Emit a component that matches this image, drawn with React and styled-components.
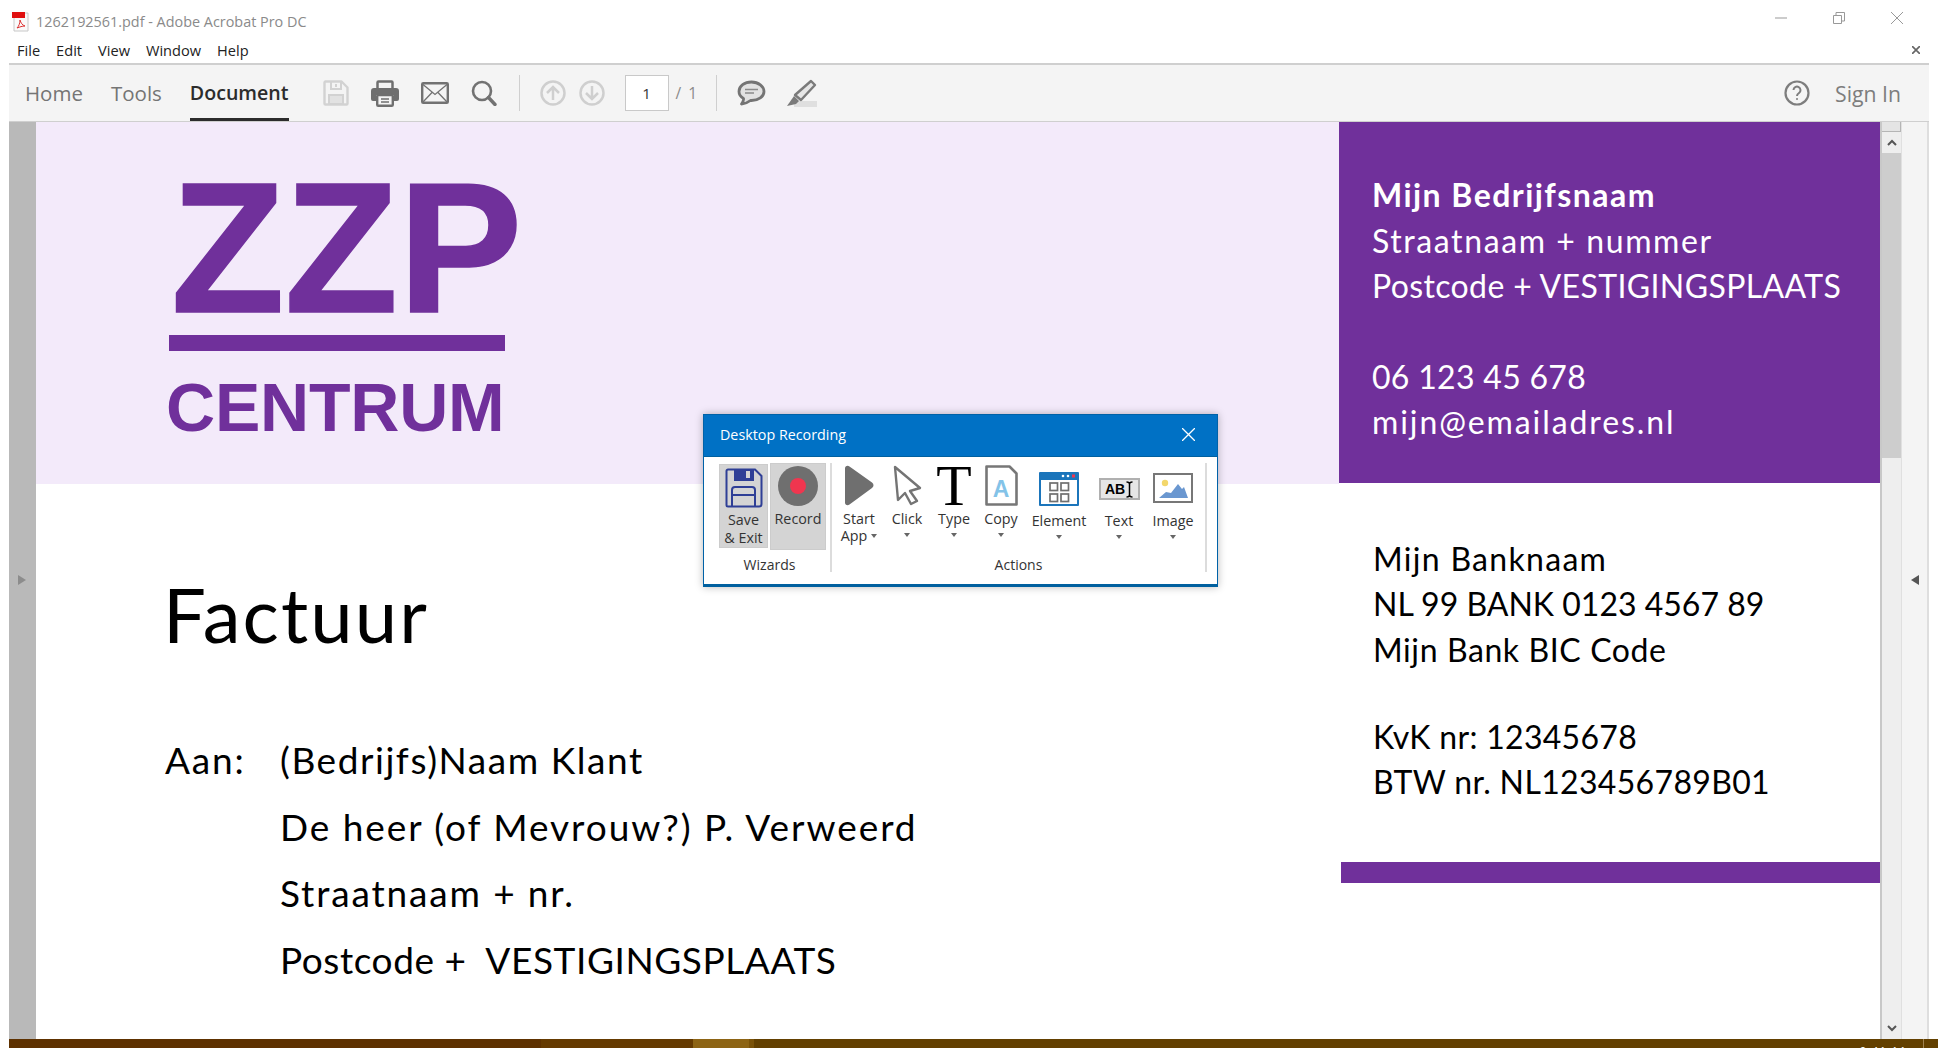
import styled, { createGlobalStyle } from "styled-components";

const GlobalStyle = createGlobalStyle`
    html, body {
        margin: 0;
        padding: 0;
        background: #fff;
        overflow: hidden;
    }
    * {
        box-sizing: border-box;
    }
`;

const UI_FONT = `"Open Sans", "Noto Sans", sans-serif`;
const DOC_FONT = `Lato, "Noto Sans", sans-serif`;
const LOGO_FONT = `"Liberation Sans", Arial, sans-serif`;
const PURPLE = "#70309b";

const Window = styled.div`
    width: 1938px;
    height: 1048px;
    display: flex;
    flex-direction: column;
    background: #fff;
    overflow: hidden;
    font-family: ${UI_FONT};
`;

const TitleBar = styled.div`
    height: 35px;
    display: flex;
    align-items: center;
    justify-content: space-between;
    padding: 8px 0 0 12px;
`;

const TitleLeft = styled.div`
    display: flex;
    align-items: center;
    gap: 6px;
    font-size: 14.4px;
    color: #8a8a8a;
`;

const WindowButtons = styled.div`
    display: flex;
    align-items: center;
    gap: 46px;
    padding: 0 35px 8px 0;
`;

const MenuBar = styled.div`
    height: 28px;
    display: flex;
    align-items: center;
    justify-content: space-between;
    padding: 1px 18px 0 17px;
`;

const MenuList = styled.div`
    display: flex;
    gap: 16px;
    font-size: 14.6px;
    color: #222;
`;

const Toolbar = styled.div`
    height: 59px;
    margin: 0 9px;
    display: flex;
    align-items: center;
    background: #f4f4f4;
    border-top: 2px solid #cfcfcf;
    border-bottom: 1px solid #cfcfcf;
    padding-left: 16px;
`;

const Tab = styled.div`
    height: 100%;
    display: flex;
    align-items: center;
    padding-top: 2px;
    margin-right: 28px;
    font-size: ${(p) => (p.$active ? 19.6 : 20.5)}px;
    font-weight: ${(p) => (p.$active ? 600 : 500)};
    color: ${(p) => (p.$active ? "#2c2c2c" : "#757575")};
    border-bottom: 3px solid ${(p) => (p.$active ? "#2c2c2c" : "transparent")};
`;

const ToolIcons = styled.div`
    display: flex;
    align-items: center;
    gap: ${(p) => p.$gap || 22}px;
    margin-left: ${(p) => p.$left || 0}px;
`;

const Divider = styled.div`
    width: 1px;
    height: 36px;
    background: #cfcfcf;
    margin: 0 ${(p) => p.$right || 20}px 0 ${(p) => p.$left || 22}px;
`;

const PageBox = styled.div`
    width: 44px;
    height: 36px;
    margin-left: 20px;
    display: flex;
    align-items: center;
    justify-content: center;
    background: #fff;
    border: 1px solid #c9c9c9;
    font-size: 15px;
    color: #333;
`;

const PageTotal = styled.div`
    margin-left: 7px;
    font-size: 15.5px;
    color: #8a8a8a;
    word-spacing: 3px;
`;

const ToolbarRight = styled.div`
    margin-left: auto;
    display: flex;
    align-items: center;
    gap: 25px;
    padding-right: 28px;
    font-size: 21.2px;
    font-weight: 500;
    color: #7d7d7d;
`;

const Content = styled.div`
    flex: 1;
    min-height: 0;
    margin-left: 9px;
    display: flex;
`;

const LeftGutter = styled.div`
    width: 27px;
    background: #b9b9b9;
    display: flex;
    align-items: center;
    justify-content: center;
    padding: 0 2px 2px 0;
`;

const Page = styled.div`
    position: relative;
    width: 1844px;
    display: grid;
    grid-template-columns: 1303px 541px;
    background: #fff;
    overflow: hidden;
`;

const MainColumn = styled.div`
    display: flex;
    flex-direction: column;
`;

const Banner = styled.div`
    height: 362px;
    background: #f3eafa;
    padding: 51px 0 0 133px;
    color: ${PURPLE};
    font-family: ${LOGO_FONT};
    font-weight: 700;
`;

const LogoMain = styled.div`
    width: fit-content;
    font-size: 186px;
    line-height: 150px;
    margin-left: 2px;
    -webkit-text-stroke: 1.5px ${PURPLE};
`;

const LogoRule = styled.div`
    width: 336px;
    height: 16px;
    margin-top: 12px;
    background: ${PURPLE};
`;

const LogoSub = styled.div`
    width: fit-content;
    font-size: 68px;
    line-height: 56px;
    margin-top: 28px;
    margin-left: -3px;
    letter-spacing: -0.2px;
`;

const Invoice = styled.div`
    padding: 84px 0 0 129px;
    font-family: ${DOC_FONT};
    color: #000;
`;

const InvoiceTitle = styled.div`
    width: fit-content;
    font-size: 76px;
    line-height: 92px;
    margin-left: -2px;
    letter-spacing: 2.1px;
`;

const Address = styled.div`
    margin-top: 67px;
    display: grid;
    grid-template-columns: 115px 1fr;
    font-size: 37px;
    line-height: 66.5px;
`;

const SideColumn = styled.div`
    display: flex;
    flex-direction: column;
    font-family: ${DOC_FONT};
`;

const ContactCard = styled.div`
    height: 361px;
    background: ${PURPLE};
    color: #fff;
    padding: 50px 0 0 33px;
    font-size: 32px;
    line-height: 45.5px;
`;

// Calibri is not installed: Lato stands in, with spacing set per line to get the widths
const Line = styled.div`
    font-weight: ${(p) => (p.$bold ? 700 : 400)};
    letter-spacing: ${(p) => p.$spacing || 0}px;
    white-space: nowrap;
`;

const Gap = styled.div`
    height: ${(p) => p.$size}px;
`;

const BankInfo = styled.div`
    padding: 53px 0 0 34px;
    font-size: 32px;
    line-height: 45.3px;
    color: #000;
`;

const SideRule = styled.div`
    height: 21px;
    margin-top: 58px;
    margin-left: 2px;
    background: ${PURPLE};
`;

const Scrollbar = styled.div`
    width: 22px;
    display: flex;
    flex-direction: column;
    align-items: center;
    background: #eeeeee;
    border-left: 2px solid #c8c8c8;
    border-right: 1px solid #e0e0e0;
`;

const ScrollCap = styled.div`
    width: 100%;
    height: 10px;
    background: #e4e4e4;
    border-right: 1px solid #b5b5b5;
    border-bottom: 1px solid #b5b5b5;
`;

const ScrollArrow = styled.div`
    height: 21px;
    display: flex;
    align-items: center;
    justify-content: center;
`;

const ScrollThumb = styled.div`
    width: 19px;
    height: 305px;
    background: #cdcdcd;
`;

const ScrollSpace = styled.div`
    flex: 1;
`;

const RightPanel = styled.div`
    width: 27px;
    background: #f4f4f4;
    border-right: 2px solid #dedede;
    display: flex;
    align-items: center;
    justify-content: center;
    padding-bottom: 2px;
`;

const TaskBar = styled.div`
    height: 9px;
    margin-left: 9px;
    display: flex;
    overflow: hidden;
`;

const TaskPart = styled.div`
    width: ${(p) => (p.$width ? `${p.$width}px` : "auto")};
    flex: ${(p) => (p.$width ? "none" : 1)};
    background: ${(p) => p.$color};
`;

const TaskTray = styled.div`
    flex: 1;
    display: flex;
    justify-content: flex-end;
    background: #634000;
    padding-right: 14px;
`;

const TrayClock = styled.div`
    padding: 5px 16px 0 0;
    border-right: 1px solid #a08250;
    color: #fff;
    font-size: 12px;
    line-height: 16px;
    letter-spacing: 1px;
`;

const Dialog = styled.div`
    position: absolute;
    left: 667px;
    top: 292px;
    width: 515px;
    height: 173px;
    display: flex;
    flex-direction: column;
    background: #fff;
    border: 1px solid #0062a8;
    border-bottom: 3px solid #00609f;
    box-shadow: 0 0 8px rgba(0, 0, 0, 0.28);
    font-family: ${UI_FONT};
`;

const DialogHeader = styled.div`
    height: 42px;
    flex: none;
    display: flex;
    align-items: center;
    justify-content: space-between;
    padding: 0 22px 3px 16px;
    background: #0071c5;
    border-bottom: 1px solid #00609f;
    color: #fff;
    font-size: 14.3px;
`;

const Ribbon = styled.div`
    flex: 1;
    display: flex;
    padding: 6px 0 0 15px;
`;

const RibbonGroup = styled.div`
    width: ${(p) => p.$width}px;
    display: flex;
    flex-direction: column;
    border-right: 2px solid #dcdcdc;
    height: 109px;
`;

const GroupItems = styled.div`
    height: 94px;
    display: flex;
    align-items: flex-start;
    padding-left: ${(p) => p.$pad || 0}px;
`;

const GroupLabel = styled.div`
    height: 15px;
    display: flex;
    align-items: center;
    justify-content: center;
    padding-right: ${(p) => p.$shift || 0}px;
    font-size: 14px;
    color: #333;
`;

const WizardButton = styled.div`
    width: ${(p) => p.$width}px;
    height: ${(p) => p.$height}px;
    margin-top: ${(p) => p.$top || 0}px;
    margin-right: 2px;
    padding-top: ${(p) => p.$pad}px;
    display: flex;
    flex-direction: column;
    align-items: center;
    background: #d4d4d4;
    border: 1px solid #cccccc;
    font-size: 14.3px;
    line-height: 18px;
    color: #333;
    text-align: center;
    white-space: nowrap;
`;

const WizardText = styled.span`
    margin-top: ${(p) => p.$top}px;
`;

const ActionItem = styled.div`
    width: ${(p) => p.$width}px;
    display: flex;
    flex-direction: column;
    align-items: center;
    font-size: 14.3px;
    line-height: 17px;
    color: #333;
    text-align: center;
    white-space: nowrap;
`;

const ActionIcon = styled.div`
    height: 43px;
    display: flex;
    align-items: flex-end;
    justify-content: center;
    padding-bottom: ${(p) => p.$bottom || 0}px;
`;

const ActionText = styled.div`
    margin-top: ${(p) => p.$top || 4}px;
`;

const Caret = styled.span`
    display: ${(p) => (p.$inline ? "inline-block" : "block")};
    width: 0;
    height: 0;
    margin: ${(p) => (p.$inline ? "0 0 3px 4px" : "6px auto 0")};
    border-left: 3.5px solid transparent;
    border-right: 3.5px solid transparent;
    border-top: 4px solid #666;
`;

const Triangle = styled.div`
    width: 0;
    height: 0;
    border-top: 5px solid transparent;
    border-bottom: 5px solid transparent;
    ${(p) =>
        p.$dir === "left"
            ? "border-right: 8px solid #555;"
            : "border-left: 8px solid #8c8c8c;"}
`;

const PdfIcon = () => (
    <svg width="18" height="20" viewBox="0 0 18 20">
        <path d="M2 1h14v18H2z" fill="#fafafa" stroke="#c8c8c8" />
        <rect x="0" y="0" width="13" height="6" fill="#e01010" />
        <path d="M5 16c2-2 3-5 3-8 1 3 2 5 5 6-3 0-5 1-8 2z" fill="none" stroke="#d33" strokeWidth="1" />
    </svg>
);

const MinimizeIcon = () => (
    <svg width="12" height="12" viewBox="0 0 12 12">
        <path d="M0 6h12" stroke="#999" strokeWidth="1" />
    </svg>
);

const RestoreIcon = () => (
    <svg width="12" height="12" viewBox="0 0 12 12">
        <path d="M.5 3.5h8v8h-8zM3 3V.5h8.500V9H9" fill="none" stroke="#999" />
    </svg>
);

const CloseIcon = ({ size = 12, color = "#999", width = 1 }) => (
    <svg width={size} height={size} viewBox="0 0 12 12">
        <path d="M0 0l12 12M12 0L0 12" stroke={color} strokeWidth={width} />
    </svg>
);

const SaveIcon = () => (
    <svg width="26" height="26" viewBox="0 0 26 26">
        <path d="M2.500 1.500h16l6 6v16a1 1 0 0 1-1 1h-21a1 1 0 0 1-1-1v-21a1 1 0 0 1 1-1z" fill="#f4f4f4" stroke="#d2d2d2" strokeWidth="2.400" strokeLinejoin="round" />
        <path d="M8 2v7h10V2" fill="none" stroke="#d2d2d2" strokeWidth="2" />
        <path d="M13 4v3" stroke="#d2d2d2" strokeWidth="2" />
        <rect x="6" y="15" width="14" height="9" fill="#e2e2e2" stroke="#d2d2d2" strokeWidth="2" />
    </svg>
);

const PrintIcon = () => (
    <svg width="28" height="27" viewBox="0 0 28 27">
        <rect x="6.500" y="1.500" width="15" height="9" rx="1" fill="#f4f4f4" stroke="#6f6f6f" strokeWidth="2.500" />
        <path d="M3 8h22a3 3 0 0 1 3 3v8a2 2 0 0 1-2 2h-3v-6H5v6H2a2 2 0 0 1-2-2v-8a3 3 0 0 1 3-3z" fill="#6f6f6f" />
        <rect x="6.200" y="15" width="15.600" height="10.800" rx="1" fill="#f4f4f4" stroke="#6f6f6f" strokeWidth="2.400" />
        <path d="M10 19h8M10 22h8" stroke="#6f6f6f" strokeWidth="1.500" />
    </svg>
);

const MailIcon = () => (
    <svg width="28" height="22" viewBox="0 0 28 22" fill="none" stroke="#727272">
        <rect x="1.200" y="1.200" width="25.600" height="19.600" rx="1" strokeWidth="2.400" />
        <path d="M2 2.500l12 10 12-10M2 20l9-9.500M26 20l-9-9.500" strokeWidth="1.300" />
    </svg>
);

const SearchIcon = () => (
    <svg width="26" height="26" viewBox="0 0 26 26" fill="none" stroke="#727272">
        <circle cx="11" cy="11" r="9" strokeWidth="2.600" />
        <path d="M17.500 17.500l6.500 7" strokeWidth="3.400" strokeLinecap="round" />
    </svg>
);

const RoundArrowIcon = ({ down }) => (
    <svg width="26" height="26" viewBox="0 0 26 26" fill="none" stroke="#cfcfcf" strokeWidth="2.500">
        <circle cx="13" cy="13" r="11.500" />
        <path d={down ? "M13 6v13M7 13l6 6 6-6" : "M13 20V7M7 13l6-6 6 6"} />
    </svg>
);

const CommentIcon = () => (
    <svg width="29" height="27" viewBox="0 0 29 27">
        <path d="M14.500 2C7.500 2 2 6 2 11.500c0 3 1.500 5.300 4.500 7 .3 1.800-.5 3.500-2 5.500 3.500-.2 6.500-1.600 9-3.500h1c7 0 12.500-4 12.500-9S21.500 2 14.500 2z" fill="#e2e2e2" stroke="#747474" strokeWidth="2.800" strokeLinejoin="round" />
        <path d="M8 9.500h13M8 13h9" stroke="#8a8a8a" strokeWidth="1.500" />
    </svg>
);

const PenIcon = () => (
    <svg width="31" height="29" viewBox="0 0 31 29">
        <rect x="8" y="22" width="23" height="6" fill="#dfdfdf" />
        <path d="M25 2l4 4-14 15-6-5z" fill="#e6e6e6" stroke="#7a7a7a" strokeWidth="2.400" strokeLinejoin="round" />
        <path d="M8 17l5 5-3 3-9 2z" fill="#7a7a7a" />
    </svg>
);

const HelpIcon = () => (
    <svg width="26" height="26" viewBox="0 0 26 26" fill="none" stroke="#7d7d7d">
        <circle cx="13" cy="13" r="11.500" strokeWidth="2.200" />
        <path d="M9.500 10a3.500 3.500 0 1 1 5.500 3c-1.300.9-2 1.500-2 3" strokeWidth="2" />
        <circle cx="13" cy="19" r="1" fill="#7d7d7d" stroke="none" />
    </svg>
);

const ChevronIcon = ({ down }) => (
    <svg width="10" height="7" viewBox="0 0 10 7" fill="none" stroke="#555" strokeWidth="2">
        <path d={down ? "M1 1l4 4 4-4" : "M1 6l4-4 4 4"} />
    </svg>
);

const FloppyIcon = () => (
    <svg width="38" height="40" viewBox="0 0 38 40">
        <path d="M3 1.500h27l6.500 6.500v28a2.500 2.500 0 0 1-2.500 2.500H3A1.500 1.500 0 0 1 1.500 37V3A1.500 1.500 0 0 1 3 1.500z" fill="#d4d4d4" stroke="#2f3f96" strokeWidth="2" />
        <rect x="9" y="1" width="20" height="12" fill="#2f3f96" />
        <rect x="21" y="3" width="4" height="7" fill="#d4d4d4" />
        <path d="M7 39V22a3 3 0 0 1 3-3h17a3 3 0 0 1 3 3v17M7 27h23" fill="none" stroke="#2f3f96" strokeWidth="2" />
    </svg>
);

const RecordIcon = () => (
    <svg width="40" height="40" viewBox="0 0 40 40">
        <circle cx="20" cy="20" r="20" fill="#6f6f6f" />
        <circle cx="20" cy="20" r="8" fill="#f0364f" />
    </svg>
);

const PlayIcon = () => (
    <svg width="30" height="41" viewBox="0 0 30 41">
        <path d="M1 3.500c0-2.500 2.500-3.500 4.500-2l22.500 16c2 1.500 2 4 0 5.500L5.500 39.500c-2 1.500-4.500.5-4.500-2z" fill="#6f6f6f" />
    </svg>
);

const CursorIcon = () => (
    <svg width="30" height="41" viewBox="0 0 30 41">
        <path d="M3 2l25 21-10 3 7 10-6 3-6-11-7 7z" fill="#fff" stroke="#747474" strokeWidth="2.400" strokeLinejoin="round" />
    </svg>
);

const CopyIcon = () => (
    <svg width="33" height="41" viewBox="0 0 33 41">
        <path d="M1.500 1.500h23l7 7v31h-30z" fill="#fff" stroke="#777" strokeWidth="2.600" strokeLinejoin="round" />
    </svg>
);

const ElementIcon = () => (
    <svg width="40" height="34" viewBox="0 0 40 34">
        <rect x="0" y="0" width="40" height="34" rx="1" fill="#1b75bb" />
        <rect x="2" y="8" width="36" height="24" fill="#fff" />
        <circle cx="24" cy="4" r="1.300" fill="#fff" />
        <circle cx="29" cy="4" r="1.300" fill="#fff" />
        <rect x="33" y="2.500" width="3" height="3" fill="#f0364f" />
        <g fill="none" stroke="#6f6f6f" strokeWidth="1.700">
            <rect x="11" y="11" width="7.500" height="7.500" />
            <rect x="22" y="11" width="7.500" height="7.500" />
            <rect x="11" y="22" width="7.500" height="7.500" />
            <rect x="22" y="22" width="7.500" height="7.500" />
        </g>
    </svg>
);

const ImageIcon = () => (
    <svg width="40" height="30" viewBox="0 0 40 30">
        <rect x="1" y="1" width="38" height="28" fill="#fff" stroke="#777" strokeWidth="2" />
        <circle cx="12" cy="10" r="3.200" fill="#f3d76b" />
        <path d="M6 25l7-6 5 1 7-9 4 5 2-2 4 11z" fill="#6a97d0" />
    </svg>
);

const IBeamIcon = () => (
    <svg width="7" height="17" viewBox="0 0 7 17" fill="none" stroke="#000">
        <path d="M.5 1c2 0 3 .5 3 2v11c0 1.500-1 2-3 2M6.500 1c-2 0-3 .5-3 2v11c0 1.500 1 2 3 2" strokeWidth="1.500" />
    </svg>
);

const TextFieldBox = styled.div`
    width: 41px;
    height: 22px;
    display: flex;
    align-items: center;
    justify-content: center;
    gap: 1px;
    background: #e6e6e6;
    border: 2px solid #b0b0b0;
    color: #000;
    font-family: ${LOGO_FONT};
    font-weight: 700;
    font-size: 14px;
    line-height: 1;
`;

const BigT = styled.div`
    font-family: "Liberation Serif", serif;
    font-size: 58px;
    line-height: 41px;
    height: 41px;
    color: #000;
`;

const CopyBox = styled.div`
    position: relative;
    width: 33px;
    height: 41px;
`;

const CopyLetter = styled.span`
    position: absolute;
    left: 0;
    right: 0;
    bottom: 5px;
    text-align: center;
    font-family: ${LOGO_FONT};
    font-weight: 700;
    font-size: 23px;
    line-height: 1;
    color: #83c3e8;
`;

const CopyGlyph = () => (
    <CopyBox>
        <CopyIcon />
        <CopyLetter>A</CopyLetter>
    </CopyBox>
);

const App = () => {
    const actions = [
        { width: 48, icon: <PlayIcon />, label: <>Start<br />App<Caret $inline /></> },
        { width: 48, icon: <CursorIcon />, label: <>Click<Caret /></> },
        { width: 46, icon: <BigT>T</BigT>, label: <>Type<Caret /></> },
        { width: 48, icon: <CopyGlyph />, label: <>Copy<Caret /></> },
        { width: 68, icon: <ElementIcon />, label: <>Element<Caret /></>, top: 6 },
        { width: 52, icon: <TextFieldBox>AB<IBeamIcon /></TextFieldBox>, bottom: 6, label: <>Text<Caret /></>, top: 6 },
        { width: 56, icon: <ImageIcon />, bottom: 3, label: <>Image<Caret /></>, top: 6 },
    ];

    return (
        <Window>
            <GlobalStyle />
            <TitleBar>
                <TitleLeft>
                    <PdfIcon />
                    1262192561.pdf - Adobe Acrobat Pro DC
                </TitleLeft>
                <WindowButtons>
                    <MinimizeIcon />
                    <RestoreIcon />
                    <CloseIcon />
                </WindowButtons>
            </TitleBar>
            <MenuBar>
                <MenuList>
                    <span>File</span>
                    <span>Edit</span>
                    <span>View</span>
                    <span>Window</span>
                    <span>Help</span>
                </MenuList>
                <CloseIcon size={8} color="#666" width={2.5} />
            </MenuBar>
            <Toolbar>
                <Tab>Home</Tab>
                <Tab>Tools</Tab>
                <Tab $active>Document</Tab>
                <ToolIcons $left={6}>
                    <SaveIcon />
                    <PrintIcon />
                    <MailIcon />
                    <SearchIcon />
                </ToolIcons>
                <Divider />
                <ToolIcons $gap={13}>
                    <RoundArrowIcon />
                    <RoundArrowIcon down />
                </ToolIcons>
                <PageBox>1</PageBox>
                <PageTotal>/ 1</PageTotal>
                <Divider $left={19} $right={20} />
                <ToolIcons $gap={20}>
                    <CommentIcon />
                    <PenIcon />
                </ToolIcons>
                <ToolbarRight>
                    <HelpIcon />
                    Sign In
                </ToolbarRight>
            </Toolbar>
            <Content>
                <LeftGutter>
                    <Triangle />
                </LeftGutter>
                <Page>
                    <MainColumn>
                        <Banner>
                            <LogoMain>ZZP</LogoMain>
                            <LogoRule />
                            <LogoSub>CENTRUM</LogoSub>
                        </Banner>
                        <Invoice>
                            <InvoiceTitle>Factuur</InvoiceTitle>
                            <Address>
                                <Line $spacing={1.8}>Aan:</Line>
                                <Line $spacing={1.55}>(Bedrijfs)Naam Klant</Line>
                                <span />
                                <Line $spacing={1.95}>De heer (of Mevrouw?) P. Verweerd</Line>
                                <span />
                                <Line $spacing={1.85}>Straatnaam + nr.</Line>
                                <span />
                                <Line $spacing={0.57}>Postcode +&nbsp; VESTIGINGSPLAATS</Line>
                            </Address>
                        </Invoice>
                    </MainColumn>
                    <SideColumn>
                        <ContactCard>
                            <Line $bold $spacing={1.45}>Mijn Bedrijfsnaam</Line>
                            <Line $spacing={1.6}>Straatnaam + nummer</Line>
                            <Line $spacing={0.37}>Postcode + VESTIGINGSPLAATS</Line>
                            <Gap $size={45} />
                            <Line $spacing={0.3}>06 123 45 678</Line>
                            <Line $spacing={1.9}>mijn@emailadres.nl</Line>
                        </ContactCard>
                        <BankInfo>
                            <Line $spacing={1.3}>Mijn Banknaam</Line>
                            <Line>NL 99 BANK 0123 4567 89</Line>
                            <Line $spacing={0.6}>Mijn Bank BIC Code</Line>
                            <Gap $size={42} />
                            <Line $spacing={0.3}>KvK nr: 12345678</Line>
                            <Line $spacing={0.33}>BTW nr. NL123456789B01</Line>
                        </BankInfo>
                        <SideRule />
                    </SideColumn>
                    <Dialog>
                        <DialogHeader>
                            Desktop Recording
                            <CloseIcon size={13} color="#fff" width={1.2} />
                        </DialogHeader>
                        <Ribbon>
                            <RibbonGroup $width={113}>
                                <GroupItems>
                                    <WizardButton $width={49} $height={84} $top={1} $pad={3}>
                                        <FloppyIcon />
                                        <WizardText $top={3}>Save<br />&amp; Exit</WizardText>
                                    </WizardButton>
                                    <WizardButton $width={56} $height={87} $pad={2}>
                                        <RecordIcon />
                                        <WizardText $top={4}>Record</WizardText>
                                    </WizardButton>
                                </GroupItems>
                                <GroupLabel $shift={10}>Wizards</GroupLabel>
                            </RibbonGroup>
                            <RibbonGroup $width={375}>
                                <GroupItems $pad={3}>
                                    {actions.map((a, i) => (
                                        <ActionItem key={i} $width={a.width}>
                                            <ActionIcon $bottom={a.bottom}>{a.icon}</ActionIcon>
                                            <ActionText $top={a.top}>{a.label}</ActionText>
                                        </ActionItem>
                                    ))}
                                </GroupItems>
                                <GroupLabel>Actions</GroupLabel>
                            </RibbonGroup>
                        </Ribbon>
                    </Dialog>
                </Page>
                <Scrollbar>
                    <ScrollCap />
                    <ScrollArrow>
                        <ChevronIcon />
                    </ScrollArrow>
                    <ScrollThumb />
                    <ScrollSpace />
                    <ScrollArrow>
                        <ChevronIcon down />
                    </ScrollArrow>
                </Scrollbar>
                <RightPanel>
                    <Triangle $dir="left" />
                </RightPanel>
            </Content>
            <TaskBar>
                <TaskPart $width={532} $color="#5e3100" />
                <TaskPart $width={152} $color="#653a00" />
                <TaskPart $width={56} $color="#8d6414" />
                <TaskPart $width={5} $color="#7a5208" />
                <TaskTray>
                    <TrayClock>9:41:11</TrayClock>
                </TaskTray>
            </TaskBar>
        </Window>
    );
};

export default App;
